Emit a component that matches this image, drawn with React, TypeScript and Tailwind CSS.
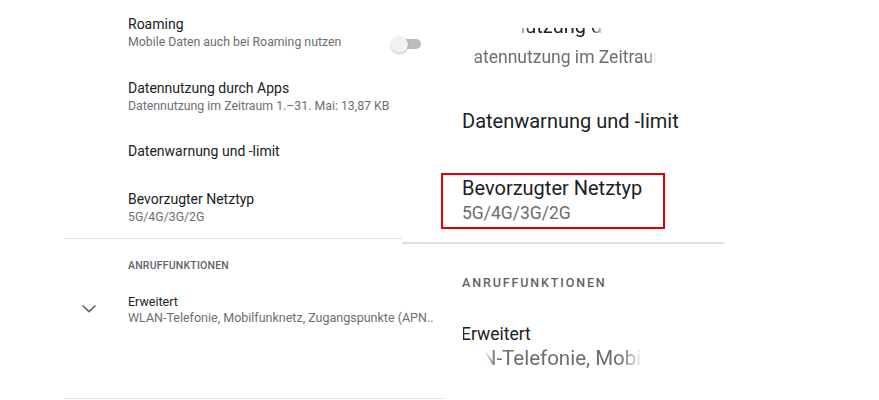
import React from "react";

const font = { fontFamily: "Roboto, 'Noto Sans', sans-serif" };

function Toggle() {
  return (
    <div className="relative w-[30px] h-[17px] mt-[22px]">
      <div className="absolute left-[6px] top-[2.5px] w-[24px] h-[10px] rounded-full bg-[#bdbdbd]" />
      <div className="absolute left-0 top-0 w-[17px] h-[17px] rounded-full bg-[#f1f1f1] shadow-[0_1px_2px_rgba(0,0,0,0.25)]" />
    </div>
  );
}

function Chevron() {
  return (
    <svg width="16" height="10" viewBox="0 0 16 10" className="ml-[17px] mt-[10px]">
      <polyline points="1.5,1.5 8,7.5 14.5,1.5" fill="none" stroke="#5f6368" strokeWidth="1.7" />
    </svg>
  );
}

export default function App() {
  return (
    <div className="relative w-[879px] h-[400px] bg-white overflow-hidden" style={font}>
      {/* Settings list */}
      <div className="ml-[64px] w-[379px] flex flex-col">
        <div className="h-[64px] pt-[14px] flex justify-between pr-[22px]">
          <div className="pl-[64px]">
            <div className="text-[14px] leading-[20px] text-[#202124]">Roaming</div>
            <div className="text-[12.3px] leading-[16px] text-[#6b6e72]">Mobile Daten auch bei Roaming nutzen</div>
          </div>
          <Toggle />
        </div>
        <div className="h-[63px] pt-[14px] pl-[64px]">
          <div className="text-[14px] leading-[20px] text-[#202124]">Datennutzung durch Apps</div>
          <div className="text-[12.3px] leading-[16px] text-[#6b6e72]">Datennutzung im Zeitraum 1.–31. Mai: 13,87 KB</div>
        </div>
        <div className="h-[48px] pt-[14px] pl-[64px]">
          <div className="text-[14px] leading-[20px] text-[#202124]">Datenwarnung und -limit</div>
        </div>
        <div className="h-[63px] pt-[14px] pl-[64px]">
          <div className="text-[14px] leading-[20px] text-[#202124]">Bevorzugter Netztyp</div>
          <div className="text-[12.3px] leading-[16px] text-[#6b6e72]">5G/4G/3G/2G</div>
        </div>
        <div className="h-px bg-[#e3e3e3]" />
        <div className="h-[55px] pt-[20px] pl-[64px]">
          <div className="text-[10.5px] leading-[14px] font-medium tracking-[0.02em] text-[#5f6368]">ANRUFFUNKTIONEN</div>
        </div>
        <div className="h-[104px] flex">
          <div className="w-[64px]">
            <Chevron />
          </div>
          <div>
            <div className="text-[12.5px] leading-[16px] text-[#202124]">Erweitert</div>
            <div className="text-[12.5px] leading-[16px] text-[#6b6e72] whitespace-nowrap">WLAN-Telefonie, Mobilfunknetz, Zugangspunkte (APN..</div>
          </div>
        </div>
        <div className="h-px bg-[#e3e3e3]" />
      </div>

      {/* Magnified detail */}
      <div className="absolute left-[402px] top-0 w-[323px] h-[400px] flex flex-col">
        <div className="mt-[28px] ml-[116px] w-[86px] h-[10px] overflow-hidden [mask-image:linear-gradient(to_right,transparent,black_12px,black_calc(100%-12px),transparent)]">
          <div className="-mt-[14px] -ml-[56px] text-[20px] leading-[24px] text-[#202124] whitespace-nowrap">Datennutzung durch Apps</div>
        </div>
        <div className="mt-[10px] ml-[70px] w-[184px] h-[21px] overflow-hidden [mask-image:linear-gradient(to_right,transparent,black_4px,black_calc(100%-8px),transparent)]">
          <div className="-mt-[2px] -ml-[10px] text-[17.5px] leading-[22px] text-[#6b6e72] whitespace-nowrap">Datennutzung im Zeitraum 1.–31. Mai: 13,87 KB</div>
        </div>
        <div className="mt-[40px] ml-[60px] text-[20px] leading-[24px] text-[#202124] whitespace-nowrap">Datenwarnung und -limit</div>
        <div className="mt-[39.5px] ml-[39px] w-[224px] h-[56px] border-2 border-[#e10000] pt-px pl-[19px]">
          <div className="text-[20px] leading-[24px] text-[#202124] whitespace-nowrap">Bevorzugter Netztyp</div>
          <div className="mt-[2px] text-[17.5px] leading-[22px] text-[#6b6e72]">5G/4G/3G/2G</div>
        </div>
        <div className="h-[20px] bg-white pt-[13px]">
          <div className="h-[2px] bg-[#e0e0e0]" />
        </div>
        <div className="mt-[26.5px] ml-[60px] text-[12.5px] leading-[16px] font-medium tracking-[0.15em] text-[#5f6368] whitespace-nowrap">ANRUFFUNKTIONEN</div>
        <div className="mt-[32px] ml-[61px] w-[100px] h-[22px] overflow-hidden">
          <div className="-ml-[2px] text-[17.5px] leading-[22px] text-[#202124] whitespace-nowrap">Erweitert</div>
        </div>
        <div className="mt-px ml-[83px] w-[158px] h-[24px] overflow-hidden [mask-image:linear-gradient(to_right,transparent,black_10px,black_calc(100%-22px),transparent)]">
          <div className="-ml-[46px] text-[20.5px] leading-[24px] text-[#6b6e72] whitespace-nowrap">WLAN-Telefonie, Mobilfunknetz, Zugangspunkte</div>
        </div>
      </div>
    </div>
  );
}
